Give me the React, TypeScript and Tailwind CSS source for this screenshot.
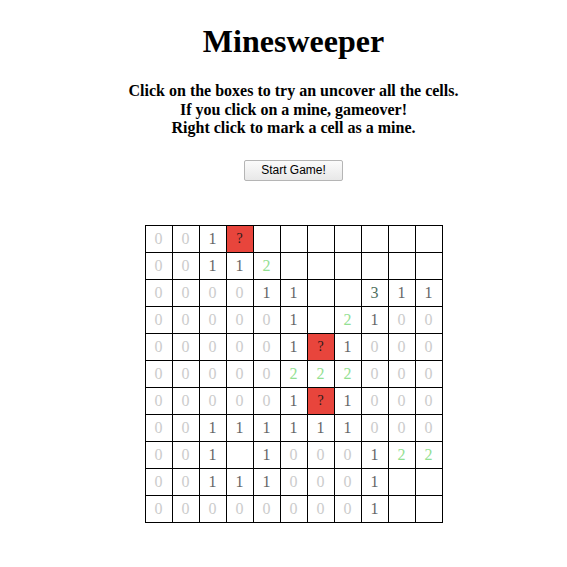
import React from "react"

const board: string[][] = [
  ["0", "0", "1", "?", "", "", "", "", "", "", ""],
  ["0", "0", "1", "1", "2", "", "", "", "", "", ""],
  ["0", "0", "0", "0", "1", "1", "", "", "3", "1", "1"],
  ["0", "0", "0", "0", "0", "1", "", "2", "1", "0", "0"],
  ["0", "0", "0", "0", "0", "1", "?", "1", "0", "0", "0"],
  ["0", "0", "0", "0", "0", "2", "2", "2", "0", "0", "0"],
  ["0", "0", "0", "0", "0", "1", "?", "1", "0", "0", "0"],
  ["0", "0", "1", "1", "1", "1", "1", "1", "0", "0", "0"],
  ["0", "0", "1", "", "1", "0", "0", "0", "1", "2", "2"],
  ["0", "0", "1", "1", "1", "0", "0", "0", "1", "", ""],
  ["0", "0", "0", "0", "0", "0", "0", "0", "1", "", ""],
]

function Cell({ value }: { value: string }) {
  if (value === "?") {
    return (
      <div className="flex items-center justify-center bg-[#e8453c] text-[14px] text-[#2a1a1a]">?</div>
    )
  }
  const color =
    value === "0"
      ? "text-[#cccccc]"
      : value === "1"
        ? "text-[#666666]"
        : value === "2"
          ? "text-[#93e093]"
          : "text-[#4f6f5f]"
  return <div className={`flex items-center justify-center bg-white text-[16px] ${color}`}>{value}</div>
}

export default function App() {
  return (
    <div className="min-h-[567px] bg-white pl-5 font-['Liberation_Serif',serif] text-black">
      <div className="flex flex-col items-center">
        <h1 className="mt-[23px] text-[32px] font-bold leading-[37px]">Minesweeper</h1>
        <div className="mt-[22px] text-center text-[16px] font-bold leading-[18.5px]">
          <div>Click on the boxes to try an uncover all the cells.</div>
          <div>If you click on a mine, gameover!</div>
          <div>Right click to mark a cell as a mine.</div>
        </div>
        <button className="mt-[22px] h-[21px] w-[99px] rounded-[2px] border border-[#b5b5b5] bg-gradient-to-b from-[#fbfbfb] to-[#e8e8e8] font-['Liberation_Sans',sans-serif] text-[12px] leading-none text-black">
          Start Game!
        </button>
        <div className="mt-[44px] grid grid-cols-[repeat(11,26px)] grid-rows-[repeat(11,26px)] gap-px border border-black bg-black">
          {board.flatMap((row, r) => row.map((v, c) => <Cell key={`${r}-${c}`} value={v} />))}
        </div>
      </div>
    </div>
  )
}
